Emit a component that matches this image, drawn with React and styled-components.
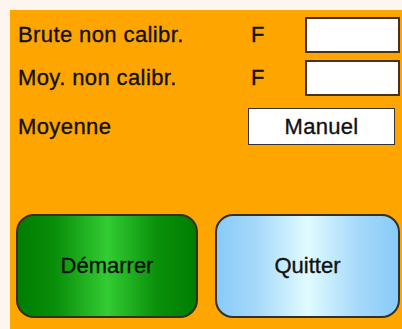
import React from "react";
import styled, { createGlobalStyle } from "styled-components";

const Global = createGlobalStyle`
  html, body { margin: 0; padding: 0; background: #fdf6ee; }
  body { font-family: "Liberation Sans", Arial, sans-serif; }
`;

const Page = styled.div`
  padding: 10px 0 0 10px;
  width: 402px;
  height: 329px;
  box-sizing: border-box;
`;

const Panel = styled.div`
  background: #ffa500;
  width: 392px;
  height: 319px;
  box-sizing: border-box;
  padding: 7px 2px 11px 6px;
  display: flex;
  flex-direction: column;
  color: #111;
  font-size: 22px;
  -webkit-text-stroke: 0.35px #111;
`;

const Row = styled.div`
  display: grid;
  grid-template-columns: 233px 54px 95px;
  align-items: center;
  padding-left: 2px;
  height: ${(p) => p.$h}px;
  margin-top: ${(p) => p.$mt || 0}px;
`;

const Label = styled.span`
  letter-spacing: 0.4px;
  line-height: 1;
`;

const Unit = styled.span`
  line-height: 1;
`;

const ValueBox = styled.div`
  height: 100%;
  box-sizing: border-box;
  background: #fff;
  border: 2px solid #4a2f1a;
`;

const ModeButton = styled.div`
  grid-column: 2 / 4;
  margin-left: -3px;
  width: 147px;
  height: 100%;
  box-sizing: border-box;
  background: #fff;
  border: 1.5px solid #333;
  display: flex;
  align-items: center;
  justify-content: center;
  letter-spacing: 0.3px;
`;

const Actions = styled.div`
  margin-top: auto;
  display: flex;
  gap: 17px;
`;

const BigButton = styled.div`
  width: ${(p) => p.$w}px;
  height: 104px;
  box-sizing: border-box;
  border: 2px solid #33302a;
  border-radius: 18px;
  display: flex;
  align-items: center;
  justify-content: center;
  background: ${(p) =>
    p.$tone === "green"
      ? "linear-gradient(90deg, #007d00 0%, #0a900a 22%, #33cc33 50%, #0a900a 78%, #007d00 100%)"
      : "linear-gradient(90deg, #88cbf8 0%, #a6d9fa 22%, #e0fbff 50%, #a6d9fa 78%, #88cbf8 100%)"};
  color: #111;
  font-size: 22px;
`;

export default function App() {
  return (
    <>
      <Global />
      <Page>
        <Panel>
          <Row $h={36}>
            <Label>Brute non calibr.</Label>
            <Unit>F</Unit>
            <ValueBox />
          </Row>
          <Row $h={36} $mt={7}>
            <Label>Moy. non calibr.</Label>
            <Unit>F</Unit>
            <ValueBox />
          </Row>
          <Row $h={37} $mt={12}>
            <Label>Moyenne</Label>
            <ModeButton>Manuel</ModeButton>
          </Row>
          <Actions>
            <BigButton $w={182} $tone="green">Démarrer</BigButton>
            <BigButton $w={185} $tone="blue">Quitter</BigButton>
          </Actions>
        </Panel>
      </Page>
    </>
  );
}
